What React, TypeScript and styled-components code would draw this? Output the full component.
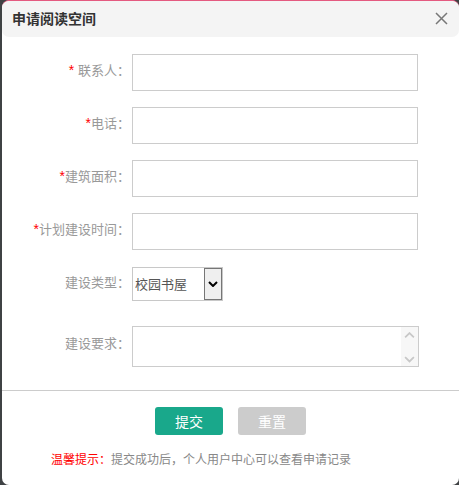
import React from "react";
import styled, { createGlobalStyle } from "styled-components";

const Global = createGlobalStyle`
  html, body { margin: 0; padding: 0; }
  body {
    background: #3f4244;
    font-family: "Noto Sans CJK SC", "Noto Sans", sans-serif;
    width: 459px;
    height: 485px;
    overflow: hidden;
  }
`;

const Page = styled.div`
  padding: 0 0 0 2px;
  height: 485px;
  box-sizing: border-box;
`;

const Modal = styled.div`
  width: 457px;
  height: 485px;
  box-sizing: border-box;
  background: #fff;
  border-top: 1px solid #e45a80;
  border-radius: 7px;
  display: flex;
  flex-direction: column;
  overflow: hidden;
`;

const Header = styled.div`
  height: 36px;
  background: #f4f4f4;
  border-radius: 7px;
  display: flex;
  align-items: center;
  justify-content: space-between;
  padding: 0 10px 2px 10px;
  box-sizing: border-box;
`;

const Title = styled.div`
  font-size: 14px;
  font-weight: bold;
  color: #333;
`;

const Close = styled.button`
  width: 16px;
  height: 16px;
  padding: 0;
  border: 0;
  background: none;
  display: flex;
  align-items: center;
  justify-content: center;
`;

const Form = styled.div`
  display: flex;
  flex-direction: column;
  gap: 16px;
  padding-top: 16px;
`;

const Row = styled.div<{ $h: number; $pt?: number }>`
  display: grid;
  grid-template-columns: 130px 286px;
  height: ${(p) => p.$h}px;
  padding-top: ${(p) => p.$pt ?? 0}px;
  box-sizing: border-box;
  align-items: ${(p) => (p.$pt ? "start" : "center")};
`;

const Label = styled.div<{ $lh?: number }>`
  text-align: right;
  padding-right: 2px;
  padding-bottom: 4px;
  font-size: 13px;
  color: #999;
  line-height: ${(p) => p.$lh ?? 33}px;
  white-space: nowrap;
`;

const Star = styled.span`
  color: #f00;
  font-family: "Liberation Sans", sans-serif;
  font-size: 14px;
`;

const Input = styled.input`
  width: 286px;
  height: 37px;
  box-sizing: border-box;
  border: 1px solid #ccc;
  outline: none;
  padding: 0 6px;
  font-size: 13px;
`;

const SelectBox = styled.div`
  width: 91px;
  height: 34px;
  box-sizing: border-box;
  border: 1px solid #c8c8c8;
  display: flex;
  background: #fff;
`;

const Select = styled.select`
  flex: 1;
  min-width: 0;
  border: 0;
  outline: none;
  appearance: none;
  background: transparent;
  padding: 0 0 0 2px;
  font-family: "Noto Sans CJK SC", sans-serif;
  font-size: 13px;
  color: #555;
`;

const SelectArrow = styled.div`
  width: 18px;
  box-sizing: border-box;
  border: 1px solid #767676;
  background: #efefef;
  display: flex;
  align-items: center;
  justify-content: center;
`;

const AreaBox = styled.div`
  width: 287px;
  height: 41px;
  box-sizing: border-box;
  border: 1px solid #ccc;
  display: flex;
`;

const TextArea = styled.textarea`
  flex: 1;
  border: 0;
  outline: none;
  resize: none;
  padding: 4px 6px;
  font-size: 13px;
`;

const ScrollCol = styled.div`
  width: 17px;
  background: #f7f7f7;
  display: flex;
  flex-direction: column;
  align-items: center;
  justify-content: space-between;
  padding: 5px 0 3px;
  box-sizing: border-box;
`;

const Divider = styled.div`
  height: 1px;
  background: #ccc;
  margin-top: 23px;
`;

const Buttons = styled.div`
  display: flex;
  justify-content: center;
  gap: 15px;
  margin-top: 16px;
`;

const Btn = styled.button<{ $bg: string }>`
  width: 68px;
  height: 28px;
  border: 0;
  border-radius: 3px;
  background: ${(p) => p.$bg};
  color: #fff;
  font-family: "Noto Sans CJK SC", sans-serif;
  font-size: 14px;
  padding: 0;
`;

const Tip = styled.div`
  margin-top: 15px;
  padding-left: 49px;
  font-size: 12px;
  color: #888;
  line-height: 17px;
`;

const TipHead = styled.span`
  color: #f00;
`;

const Chevron = ({ up, color, w = 11, sw = 2 }: { up?: boolean; color: string; w?: number; sw?: number }) => (
  <svg width={w} height={w * 0.6} viewBox="0 0 10 6">
    <path d={up ? "M1 5 L5 1 L9 5" : "M1 1 L5 5 L9 1"} fill="none" stroke={color} strokeWidth={sw} />
  </svg>
);

export default function App() {
  return (
    <>
      <Global />
      <Page>
        <Modal>
          <Header>
            <Title>申请阅读空间</Title>
            <Close aria-label="close">
              <svg width="13" height="13" viewBox="0 0 13 13">
                <path d="M1 1 L12 12 M12 1 L1 12" stroke="#777" strokeWidth="1.5" />
              </svg>
            </Close>
          </Header>
          <Form>
            <Row $h={37}>
              <Label><Star>* </Star>联系人：</Label>
              <Input />
            </Row>
            <Row $h={37}>
              <Label><Star>*</Star>电话：</Label>
              <Input />
            </Row>
            <Row $h={37}>
              <Label><Star>*</Star>建筑面积：</Label>
              <Input />
            </Row>
            <Row $h={37}>
              <Label><Star>*</Star>计划建设时间：</Label>
              <Input />
            </Row>
            <Row $h={37}>
              <Label>建设类型：</Label>
              <SelectBox>
                <Select defaultValue="校园书屋">
                  <option>校园书屋</option>
                </Select>
                <SelectArrow>
                  <Chevron color="#000" w={10} sw={2} />
                </SelectArrow>
              </SelectBox>
            </Row>
            <Row $h={49} $pt={8}>
              <Label $lh={34}>建设要求：</Label>
              <AreaBox>
                <TextArea />
                <ScrollCol>
                  <Chevron up color="#c8c8c8" w={11} sw={1.6} />
                  <Chevron color="#c8c8c8" w={11} sw={1.6} />
                </ScrollCol>
              </AreaBox>
            </Row>
          </Form>
          <Divider />
          <Buttons>
            <Btn $bg="#19a88b">提交</Btn>
            <Btn $bg="#cccccc">重置</Btn>
          </Buttons>
          <Tip>
            <TipHead>温馨提示：</TipHead>提交成功后，个人用户中心可以查看申请记录
          </Tip>
        </Modal>
      </Page>
    </>
  );
}
